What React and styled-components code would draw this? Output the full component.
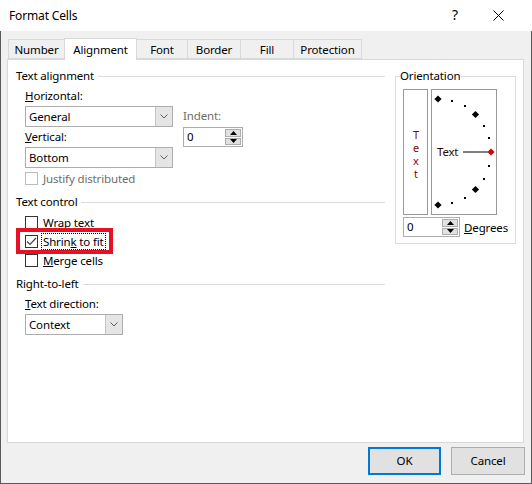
import React from 'react';
import styled, { createGlobalStyle } from 'styled-components';

const GlobalStyle = createGlobalStyle`
  html, body { margin: 0; padding: 0; background: #fff; }
  body {
    font-family: "Segoe UI", "Noto Sans", "Open Sans", sans-serif;
    font-size: 11.5px;
    letter-spacing: -0.15px;
    color: #000;
  }
  * { box-sizing: border-box; }
`;

const Window = styled.div`
  width: 532px;
  height: 484px;
  display: flex;
  flex-direction: column;
  background: #fff;
`;

const TitleBar = styled.div`
  height: 31px;
  flex: none;
  display: flex;
  align-items: center;
  padding: 0 28px 0 9px;
  background: #fff;
`;

const TitleText = styled.div`
  flex: 1;
  line-height: 16px;
  font-size: 12px;
`;

const HelpGlyph = styled.span`
  font-size: 14px;
  line-height: 16px;
  margin-right: 35px;
  margin-top: -2px;
`;

const Body = styled.div`
  flex: 1;
  display: flex;
  flex-direction: column;
  background: #f0f0f0;
  border: 1px solid #5a5a5a;
  border-top: none;
  padding: 7px 7px 8px 6px;
`;

const TabRow = styled.div`
  height: 21px;
  display: flex;
  align-items: flex-end;
  padding-left: 1px;
  position: relative;
  z-index: 1;
`;

const Tab = styled.div`
  width: ${(p) => p.$w}px;
  height: ${(p) => (p.$active ? 22 : 20)}px;
  margin-bottom: ${(p) => (p.$active ? -1 : 0)}px;
  margin-left: -1px;
  &:first-child { margin-left: 0; }
  background: ${(p) => (p.$active ? '#fff' : '#f0f0f0')};
  border: 1px solid #d9d9d9;
  border-bottom: ${(p) => (p.$active ? 'none' : '1px solid #d9d9d9')};
  display: flex;
  align-items: center;
  justify-content: center;
  padding-top: 1px;
  line-height: 16px;
`;

const Panel = styled.div`
  height: 384px;
  flex: none;
  background: #fff;
  border: 1px solid #d9d9d9;
  display: flex;
  align-items: flex-start;
  gap: 10px;
  padding: 8px 7px 0 8px;
`;

const LeftCol = styled.div`
  width: 369px;
  display: flex;
  flex-direction: column;
`;

const GroupHeader = styled.div`
  display: flex;
  align-items: center;
  gap: 4px;
  height: 16px;
  line-height: 16px;
  margin-top: ${(p) => p.$mt || 0}px;
  &::after {
    content: '';
    flex: 1;
    border-top: 1px solid #dcdcdc;
  }
`;

const Indented = styled.div`
  padding-left: 9px;
  display: flex;
  flex-direction: column;
  margin-top: ${(p) => p.$mt || 0}px;
`;

const AlignGrid = styled.div`
  display: flex;
  gap: 10px;
`;

const Column = styled.div`
  display: flex;
  flex-direction: column;
  width: ${(p) => p.$w}px;
  padding-top: ${(p) => p.$pt || 0}px;
`;

const FieldLabel = styled.div`
  line-height: 16px;
  height: 16px;
  margin-top: ${(p) => p.$mt || 0}px;
  color: ${(p) => (p.$disabled ? '#6d6d6d' : '#000')};
  white-space: nowrap;
`;

const SelectBox = styled.div`
  width: ${(p) => p.$w}px;
  height: 21px;
  margin-top: 2px;
  display: flex;
  border: 1px solid #adadad;
  background: #fff;
`;

const SelectValue = styled.div`
  flex: 1;
  padding-left: 3px;
  line-height: 19px;
`;

const SelectArrow = styled.div`
  width: 17px;
  background: #e5e5e5;
  border-left: 1px solid #c4c4c4;
  display: flex;
  align-items: center;
  justify-content: center;
`;

const SpinBox = styled.div`
  width: 60px;
  height: 20px;
  margin-top: ${(p) => p.$mt || 0}px;
  display: flex;
  border: 1px solid #adadad;
  background: #fff;
  padding: 1px;
`;

const SpinValue = styled.div`
  flex: 1;
  padding-left: 2px;
  line-height: 16px;
`;

const SpinButtons = styled.div`
  width: 16px;
  display: flex;
  flex-direction: column;
  gap: 1px;
`;

const SpinButton = styled.div`
  flex: 1;
  background: #e1e1e1;
  border: 1px solid #adadad;
  display: flex;
  align-items: center;
  justify-content: center;
`;

const CheckRow = styled.div`
  display: flex;
  align-items: center;
  gap: ${(p) => (p.$focus ? 3 : 4)}px;
  height: ${(p) => p.$h || 19}px;
  margin-top: ${(p) => p.$mt || 0}px;
  position: relative;
`;

const Box = styled.div`
  width: 13px;
  height: 13px;
  flex: none;
  border: 1px solid ${(p) => (p.$disabled ? '#bcbcbc' : '#333')};
  background: #fff;
  display: flex;
  align-items: center;
  justify-content: center;
`;

const CheckLabel = styled.span`
  line-height: 15px;
  color: ${(p) => (p.$disabled ? '#6d6d6d' : '#000')};
  border: 1px dotted ${(p) => (p.$focus ? '#000' : 'transparent')};
  padding: 0 ${(p) => (p.$focus ? 1 : 0)}px;
  white-space: nowrap;
`;

const Highlight = styled.div`
  position: absolute;
  left: -9px;
  top: -4px;
  width: 97px;
  height: 26px;
  border: 4px solid #e81123;
  pointer-events: none;
`;

const OrientGroup = styled.fieldset`
  width: 121px;
  margin: 0;
  padding: 0 7px 6px 7px;
  border: 1px solid #dcdcdc;
  min-width: 0;
`;

const OrientLegend = styled.legend`
  padding: 0 1px 0 0;
  margin-left: -3px;
  line-height: 16px;
`;

const OrientRow = styled.div`
  display: flex;
  gap: 3px;
  height: 126px;
  margin-top: 5px;
`;

const VerticalBox = styled.div`
  width: 25px;
  border: 1px solid #999;
  display: flex;
  align-items: center;
  justify-content: center;
  color: #7a0a0a;
`;

const VerticalText = styled.span`
  writing-mode: vertical-lr;
  text-orientation: upright;
  font-size: 11px;
  letter-spacing: -2px;
  line-height: 14px;
  margin-top: 2px;
`;

const ArcBox = styled.div`
  width: 66px;
  border: 1px solid #999;
  background: #fff;
`;

const DegreesRow = styled.div`
  display: flex;
  align-items: center;
  gap: 4px;
  margin-top: 2px;
`;

const ButtonRow = styled.div`
  display: flex;
  justify-content: flex-end;
  gap: 10px;
  margin-top: 4px;
  margin-right: -1px;
`;

const DialogButton = styled.div`
  width: ${(p) => p.$w}px;
  height: 28px;
  background: #e1e1e1;
  border: ${(p) => (p.$default ? '2px solid #0078d7' : '1px solid #adadad')};
  display: flex;
  align-items: center;
  justify-content: center;
  line-height: 16px;
`;

const Chevron = () => (
  <svg width="8" height="5" viewBox="0 0 8 5">
    <path d="M0.5 0.5 L4 4 L7.5 0.5" fill="none" stroke="#606060" strokeWidth="1" />
  </svg>
);

const Spinner = ({ value, mt }) => (
  <SpinBox $mt={mt}>
    <SpinValue>{value}</SpinValue>
    <SpinButtons>
      <SpinButton>
        <svg width="7" height="4" viewBox="0 0 7 4"><path d="M0 4 L3.5 0 L7 4 Z" fill="#000" /></svg>
      </SpinButton>
      <SpinButton>
        <svg width="7" height="4" viewBox="0 0 7 4"><path d="M0 0 L3.5 4 L7 0 Z" fill="#000" /></svg>
      </SpinButton>
    </SpinButtons>
  </SpinBox>
);

const Select = ({ value, w }) => (
  <SelectBox $w={w}>
    <SelectValue>{value}</SelectValue>
    <SelectArrow><Chevron /></SelectArrow>
  </SelectBox>
);

const Checkbox = ({ checked, disabled, focus, children, mt, h }) => (
  <CheckRow $mt={mt} $h={h} $focus={focus}>
    <Box $disabled={disabled}>
      {checked && (
        <svg width="11" height="11" viewBox="0 0 11 11">
          <path d="M1 5.5 L4 8.5 L10 2" fill="none" stroke="#444" strokeWidth="1.2" />
        </svg>
      )}
    </Box>
    <CheckLabel $disabled={disabled} $focus={focus}>{children}</CheckLabel>
    {focus && <Highlight />}
  </CheckRow>
);

const arcPoint = (deg) => {
  const r = 53;
  const a = (deg * Math.PI) / 180;
  return [6 + r * Math.cos(a), 62 - r * Math.sin(a)];
};

const Diamond = ({ deg, color }) => {
  const [x, y] = arcPoint(deg);
  return (
    <path
      d={`M${x} ${y - 3.6} L${x + 3.6} ${y} L${x} ${y + 3.6} L${x - 3.6} ${y} Z`}
      fill={color || '#000'}
    />
  );
};

const Dot = ({ deg }) => {
  const [x, y] = arcPoint(deg);
  return <rect x={Math.round(x) - 1} y={Math.round(y) - 1} width="2" height="2" fill="#000" />;
};

const OrientationDial = () => (
  <svg width="64" height="124" viewBox="0 0 64 124">
    {[75, 60, 30, 15, -15, -30, -60, -75].map((d) => <Dot key={d} deg={d} />)}
    <Diamond deg={90} />
    <Diamond deg={45} />
    <Diamond deg={-45} />
    <Diamond deg={-90} />
    <text x="5" y="66" fontSize="11.5" letterSpacing="-0.2" fill="#2a0a0a" fontFamily='"Segoe UI", "Noto Sans", sans-serif'>Text</text>
    <line x1="31" y1="62" x2="56" y2="62" stroke="#000" strokeWidth="1" />
    <Diamond deg={0} color="#e00000" />
  </svg>
);

const TABS = [
  { label: 'Number', w: 57 },
  { label: 'Alignment', w: 73, active: true },
  { label: 'Font', w: 52 },
  { label: 'Border', w: 54 },
  { label: 'Fill', w: 54 },
  { label: 'Protection', w: 69 },
];

export default function App() {
  return (
    <Window>
      <GlobalStyle />
      <TitleBar>
        <TitleText>Format Cells</TitleText>
        <HelpGlyph>?</HelpGlyph>
        <svg width="11" height="11" viewBox="0 0 11 11">
          <path d="M0.5 0.5 L10.5 10.5 M10.5 0.5 L0.5 10.5" stroke="#000" strokeWidth="1" />
        </svg>
      </TitleBar>
      <Body>
        <TabRow>
          {TABS.map((t) => (
            <Tab key={t.label} $w={t.w} $active={t.active}>{t.label}</Tab>
          ))}
        </TabRow>
        <Panel>
          <LeftCol>
            <GroupHeader>Text alignment</GroupHeader>
            <Indented $mt={4}>
              <AlignGrid>
                <Column $w={148}>
                  <FieldLabel><u>H</u>orizontal:</FieldLabel>
                  <Select value="General" w={148} />
                  <FieldLabel $mt={2}><u>V</u>ertical:</FieldLabel>
                  <Select value="Bottom" w={148} />
                </Column>
                <Column $w={60} $pt={20}>
                  <FieldLabel $disabled>Indent:</FieldLabel>
                  <Spinner value="0" mt={3} />
                </Column>
              </AlignGrid>
              <Checkbox disabled mt={2} h={16}>Justify distributed</Checkbox>
            </Indented>

            <GroupHeader $mt={8}>Text control</GroupHeader>
            <Indented $mt={3}>
              <Checkbox>Wrap text</Checkbox>
              <Checkbox checked focus>Shrin<u>k</u> to fit</Checkbox>
              <Checkbox><u>M</u>erge cells</Checkbox>
            </Indented>

            <GroupHeader $mt={6}>Right-to-left</GroupHeader>
            <Indented $mt={4}>
              <FieldLabel><u>T</u>ext direction:</FieldLabel>
              <Select value="Context" w={98} />
            </Indented>
          </LeftCol>

          <OrientGroup>
            <OrientLegend>Orientation</OrientLegend>
            <OrientRow>
              <VerticalBox>
                <VerticalText>Text</VerticalText>
              </VerticalBox>
              <ArcBox><OrientationDial /></ArcBox>
            </OrientRow>
            <DegreesRow>
              <Spinner value="0" />
              <span><u>D</u>egrees</span>
            </DegreesRow>
          </OrientGroup>
        </Panel>
        <ButtonRow>
          <DialogButton $w={73} $default>OK</DialogButton>
          <DialogButton $w={74}>Cancel</DialogButton>
        </ButtonRow>
      </Body>
    </Window>
  );
}
